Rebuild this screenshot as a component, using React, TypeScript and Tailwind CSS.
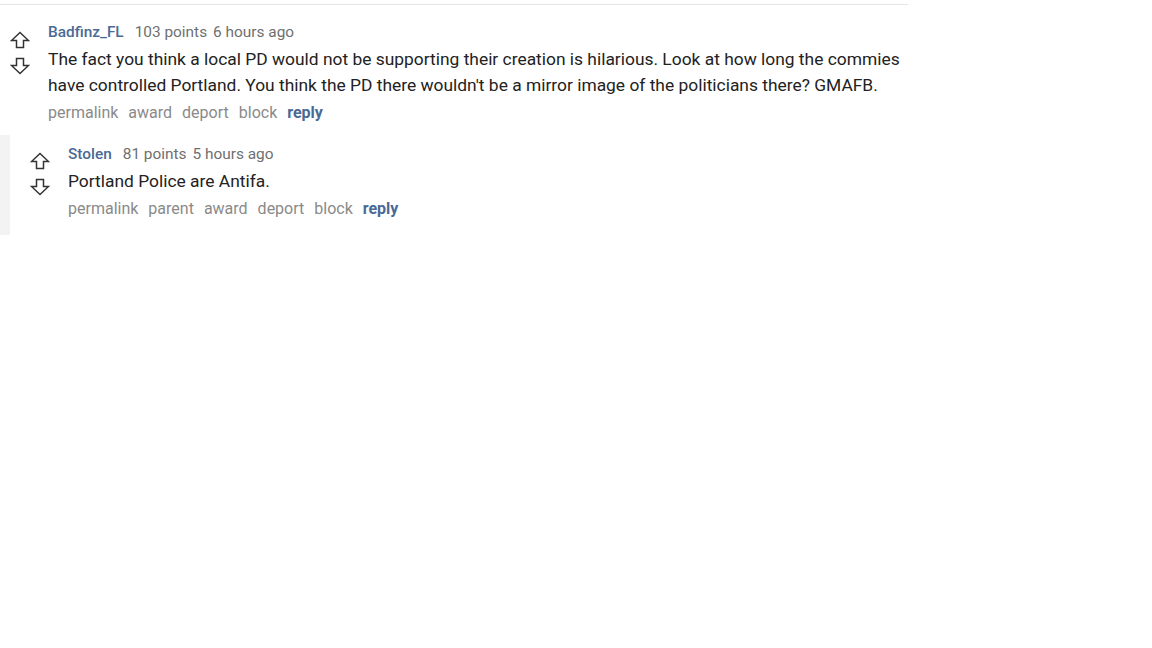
import React from 'react';

const ArrowUp = () => (
  <svg width="20" height="18" viewBox="0 0 20 18" fill="none">
    <path d="M10 1.5 L18.5 9.5 H13.5 V16.5 H6.5 V9.5 H1.5 Z" stroke="#333" strokeWidth="1.5" strokeLinejoin="miter" />
  </svg>
);

const ArrowDown = () => (
  <svg width="20" height="18" viewBox="0 0 20 18" fill="none">
    <path d="M10 16.5 L18.5 8.5 H13.5 V1.5 H6.5 V8.5 H1.5 Z" stroke="#333" strokeWidth="1.5" strokeLinejoin="miter" />
  </svg>
);

type CommentProps = {
  user: string;
  points: string;
  age: string;
  body: string[];
  links: string[];
  nested?: boolean;
};

const Comment: React.FC<CommentProps> = ({ user, points, age, body, links, nested }) => (
  <div className="flex">
    <div
      className={
        'w-[48px] flex flex-col items-center pr-[8px] gap-[8px] ' + (nested ? 'pt-[17px]' : 'pt-[26px]')
      }
    >
      <ArrowUp />
      <ArrowDown />
    </div>
    <div className="flex-1">
      <div
        className={
          'flex items-baseline gap-[11px] text-[15.4px] leading-[20px] ' + (nested ? 'pt-[9px]' : 'pt-[17px]')
        }
      >
        <span className="text-[#4a6a96] font-medium">{user}</span>
        <span className="text-[#6f6f6f]">
          {points}
          <span className="ml-[6px]">{age}</span>
        </span>
      </div>
      <div className="text-[17.4px] leading-[26px] text-[#222] pt-[4px]">
        {body.map((l, i) => (
          <div key={i}>{l}</div>
        ))}
      </div>
      <div className="flex gap-[10px] text-[16px] leading-[20px] text-[#8a8a8a] pt-[5px]">
        {links.map((l) => (
          <span key={l}>{l}</span>
        ))}
        <span className="text-[#4a6a96] font-bold">reply</span>
      </div>
    </div>
  </div>
);

export default function App() {
  return (
    <div className="w-[1152px] h-[648px] bg-white" style={{ fontFamily: 'Roboto, "Liberation Sans", sans-serif' }}>
      <div className="w-[908px] pt-[4px]">
        <div className="border-t border-[#e6e6e6]" />
        <Comment
          user="Badfinz_FL"
          points="103 points"
          age="6 hours ago"
          body={[
            'The fact you think a local PD would not be supporting their creation is hilarious. Look at how long the commies',
            "have controlled Portland. You think the PD there wouldn't be a mirror image of the politicians there? GMAFB.",
          ]}
          links={['permalink', 'award', 'deport', 'block']}
        />
        <div className="flex mt-[12px] h-[100px] overflow-hidden">
          <div className="w-[10px] bg-[#f3f3f3]" />
          <div className="flex-1 pl-[10px]">
            <Comment
              nested
              user="Stolen"
              points="81 points"
              age="5 hours ago"
              body={['Portland Police are Antifa.']}
              links={['permalink', 'parent', 'award', 'deport', 'block']}
            />
          </div>
        </div>
      </div>
    </div>
  );
}
